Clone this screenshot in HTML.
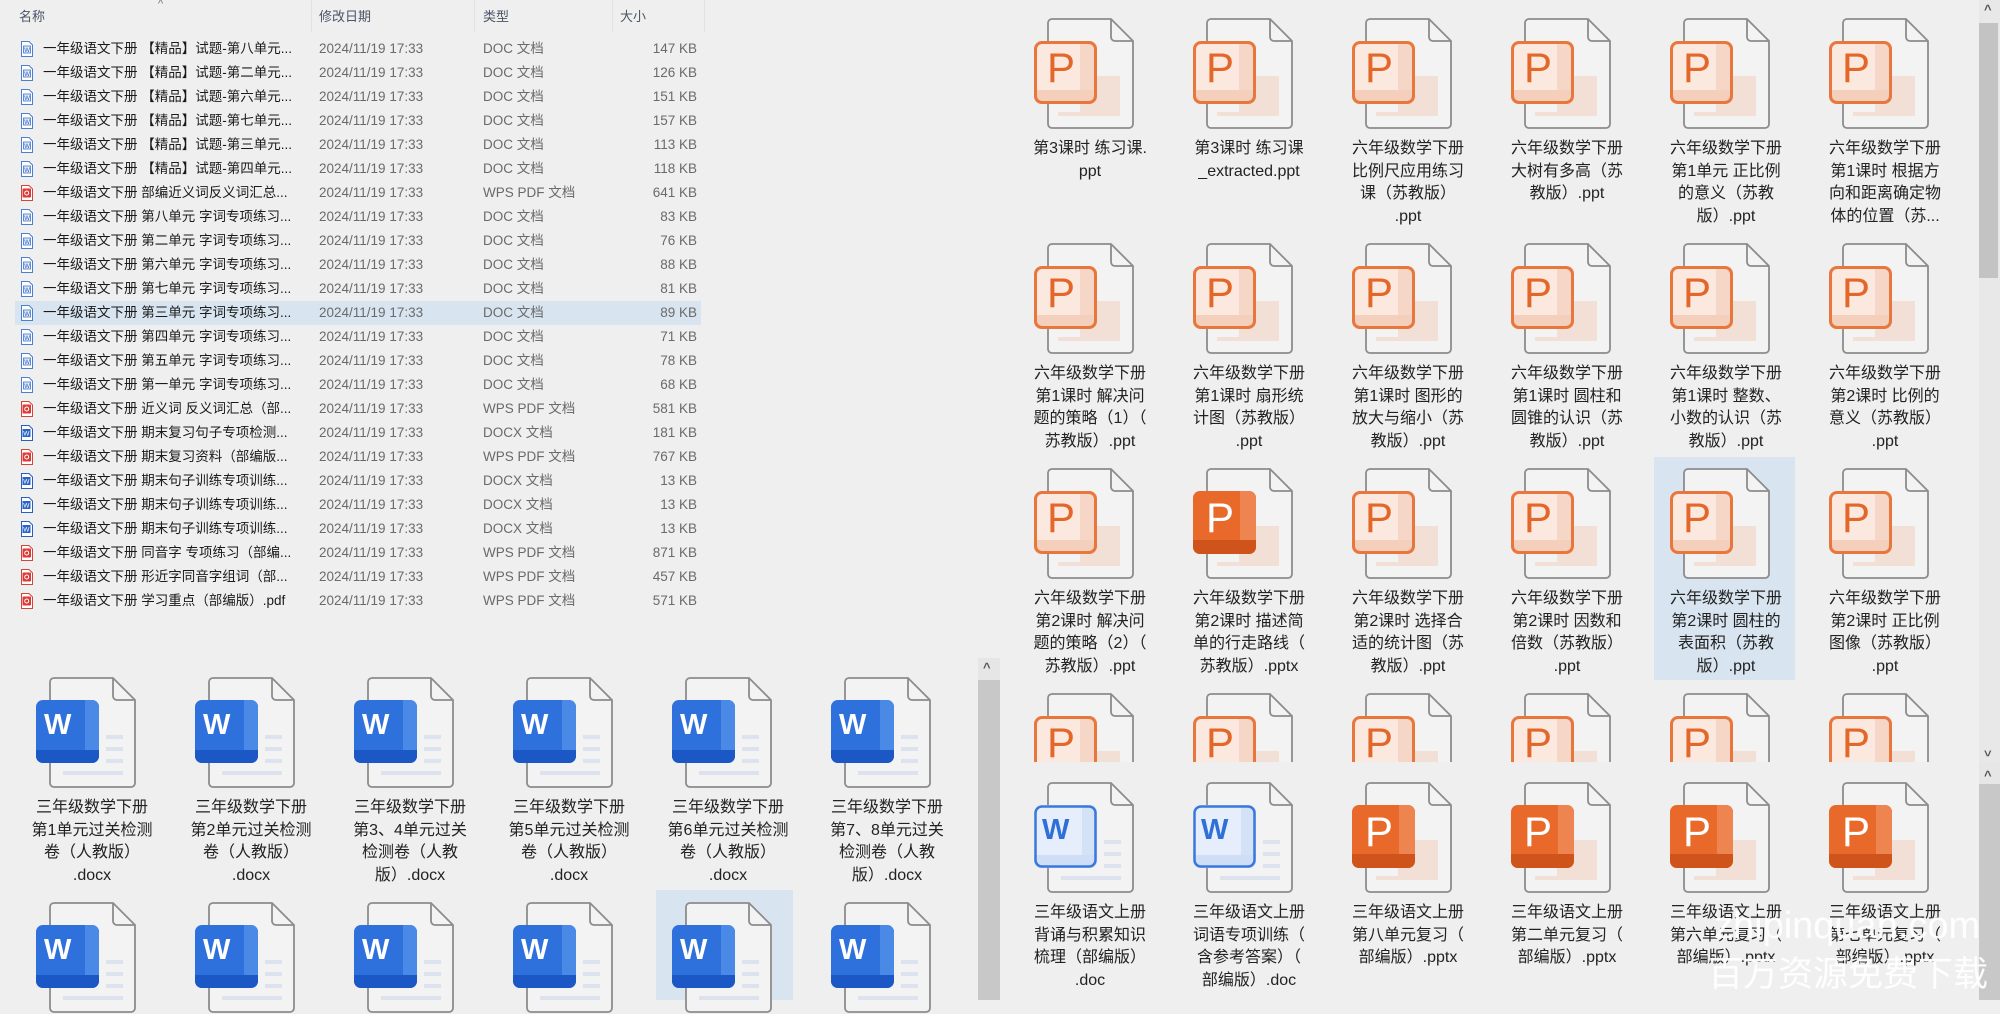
<!DOCTYPE html>
<html><head><meta charset="utf-8">
<style>
*{margin:0;padding:0;box-sizing:border-box}
body{width:2000px;height:1000px;overflow:hidden;background:#efefef;position:relative;font-family:"Liberation Sans","Noto Sans CJK SC",sans-serif;}
.a{position:absolute}
.hd{position:absolute;top:6px;font-size:13px;color:#4a5566}
.sep{position:absolute;top:0;width:1px;height:32px;background:#e2e2e2}
.row{position:absolute;left:15px;width:686px;height:24px;font-size:13.5px;line-height:24px;white-space:nowrap}
.row .n{position:absolute;left:28px;color:#1a1a1a}
.row .d{position:absolute;left:304px;color:#6a6a6a}
.row .t{position:absolute;left:468px;color:#6a6a6a}
.row .s{position:absolute;right:4px;color:#6a6a6a}
.row svg{position:absolute;left:5px;top:4px}
.it{position:absolute;width:150px}
.it svg{position:absolute;left:19px;top:0;overflow:visible}
.it .tx{position:absolute;left:0;top:120px;width:150px;text-align:center;font-size:16px;line-height:22.6px;color:#222;white-space:nowrap}
.clip{position:absolute;overflow:hidden}
</style></head><body>
<svg width="0" height="0" style="position:absolute">
<defs>
<clipPath id="bc"><rect x="0" y="23" width="63" height="63" rx="7"/></clipPath>
<symbol id="pg" viewBox="0 0 100 112"><path d="M18 1H77L99 23V106a4 4 0 0 1-4 4H18a4 4 0 0 1-4-4V5a4 4 0 0 1 4-4Z" fill="#f3f3f3" stroke="#8c8c8c" stroke-width="1.8"/><path d="M77 1V19a4 4 0 0 0 4 4H99" fill="none" stroke="#8c8c8c" stroke-width="1.8"/></symbol>
<symbol id="po" viewBox="0 0 100 112" overflow="visible"><use href="#pg" width="100" height="112"/><rect x="46" y="58" width="40" height="40" fill="#f2e0d7"/><rect x="24" y="94" width="60" height="4" fill="#f2e0d7"/>
<g clip-path="url(#bc)"><rect x="0" y="23" width="63" height="63" fill="#fbe8de"/><rect x="46" y="23" width="17" height="63" fill="#f6d6c6"/><rect x="0" y="72" width="63" height="14" fill="#f4cfbc"/></g>
<rect x="1.5" y="24.5" width="60" height="60" rx="6.5" fill="none" stroke="#e8773e" stroke-width="3"/>
<text x="13" y="64" font-size="42" fill="#e4672a" font-family="Liberation Sans">P</text></symbol>
<symbol id="pf" viewBox="0 0 100 112" overflow="visible"><use href="#pg" width="100" height="112"/><rect x="46" y="58" width="40" height="40" fill="#f2e0d7"/><rect x="24" y="94" width="60" height="4" fill="#f2e0d7"/>
<g clip-path="url(#bc)"><rect x="0" y="23" width="63" height="63" fill="#e8692a"/><rect x="47" y="23" width="16" height="63" fill="#ee8450"/><rect x="0" y="72" width="63" height="14" fill="#cf541c"/></g>
<text x="13" y="64" font-size="42" fill="#fff" font-family="Liberation Sans">P</text></symbol>
<symbol id="wf" viewBox="0 0 100 112" overflow="visible"><use href="#pg" width="100" height="112"/><g fill="#dde3ee"><rect x="70" y="58" width="17" height="4"/><rect x="70" y="70" width="17" height="4"/><rect x="70" y="82" width="17" height="4"/><rect x="27" y="94" width="60" height="4"/></g>
<g clip-path="url(#bc)"><rect x="0" y="23" width="63" height="63" fill="#2e70dc"/><rect x="49" y="23" width="14" height="63" fill="#4a89e6"/><rect x="0" y="73" width="63" height="13" fill="#1b58c6"/></g>
<text x="8" y="57" font-size="29" font-weight="bold" fill="#fff" font-family="Liberation Sans">W</text></symbol>
<symbol id="wo" viewBox="0 0 100 112" overflow="visible"><use href="#pg" width="100" height="112"/><g fill="#dde3ee"><rect x="70" y="58" width="17" height="4"/><rect x="70" y="70" width="17" height="4"/><rect x="70" y="82" width="17" height="4"/><rect x="27" y="94" width="60" height="4"/></g>
<g clip-path="url(#bc)"><rect x="0" y="23" width="63" height="63" fill="#e6eefb"/><rect x="48" y="23" width="15" height="63" fill="#d4e2f8"/><rect x="0" y="73" width="63" height="13" fill="#cfdef7"/></g>
<rect x="1.5" y="24.5" width="60" height="60" rx="6.5" fill="none" stroke="#3a78dd" stroke-width="2.5"/>
<text x="8" y="57" font-size="29" font-weight="bold" fill="#2e6fd8" font-family="Liberation Sans">W</text></symbol>
<symbol id="sw" viewBox="0 0 13 16"><path d="M1.5 .5H9L12.5 4V15.5H1.5Z" fill="#fff" stroke="#4a7fd4"/><rect x="3.5" y="5" width="7" height="7" fill="#e3ecfa" stroke="#3b72cf" stroke-width=".8"/><text x="4.3" y="11" font-size="6" fill="#2d63c4" font-family="Liberation Sans">W</text></symbol>
<symbol id="sx" viewBox="0 0 13 16"><path d="M1.5 .5H9L12.5 4V15.5H1.5Z" fill="#fff" stroke="#2a5fbf"/><rect x="2.5" y="4" width="8" height="8" fill="#2b64c8"/><text x="3.3" y="10.5" font-size="6.5" fill="#fff" font-family="Liberation Sans">W</text></symbol>
<symbol id="sp" viewBox="0 0 13 16"><path d="M1.5 .5H9L12.5 4V15.5H1.5Z" fill="#fff" stroke="#d0463d"/><rect x="2.5" y="3.5" width="8.5" height="9" rx="1" fill="#dd3a33"/><circle cx="6.7" cy="8" r="2" fill="none" stroke="#fff" stroke-width="1"/></symbol>
</defs></svg>

<div class="a" style="left:158px;top:-2px;font-size:11px;color:#777">^</div>
<div class="hd" style="left:19px">名称</div>
<div class="hd" style="left:319px">修改日期</div>
<div class="hd" style="left:483px">类型</div>
<div class="hd" style="left:620px">大小</div>
<div class="sep" style="left:311px"></div><div class="sep" style="left:474px"></div><div class="sep" style="left:612px"></div><div class="sep" style="left:704px"></div>

<div class="a" style="left:15px;top:300.5px;width:686px;height:24px;background:#d8e5f0"></div>

<div class="row" style="top:36.5px"><svg width="13" height="16"><use href="#sw"/></svg><span class="n">一年级语文下册 【精品】试题-第八单元...</span><span class="d">2024/11/19 17:33</span><span class="t">DOC 文档</span><span class="s">147 KB</span></div>
<div class="row" style="top:60.5px"><svg width="13" height="16"><use href="#sw"/></svg><span class="n">一年级语文下册 【精品】试题-第二单元...</span><span class="d">2024/11/19 17:33</span><span class="t">DOC 文档</span><span class="s">126 KB</span></div>
<div class="row" style="top:84.5px"><svg width="13" height="16"><use href="#sw"/></svg><span class="n">一年级语文下册 【精品】试题-第六单元...</span><span class="d">2024/11/19 17:33</span><span class="t">DOC 文档</span><span class="s">151 KB</span></div>
<div class="row" style="top:108.5px"><svg width="13" height="16"><use href="#sw"/></svg><span class="n">一年级语文下册 【精品】试题-第七单元...</span><span class="d">2024/11/19 17:33</span><span class="t">DOC 文档</span><span class="s">157 KB</span></div>
<div class="row" style="top:132.5px"><svg width="13" height="16"><use href="#sw"/></svg><span class="n">一年级语文下册 【精品】试题-第三单元...</span><span class="d">2024/11/19 17:33</span><span class="t">DOC 文档</span><span class="s">113 KB</span></div>
<div class="row" style="top:156.5px"><svg width="13" height="16"><use href="#sw"/></svg><span class="n">一年级语文下册 【精品】试题-第四单元...</span><span class="d">2024/11/19 17:33</span><span class="t">DOC 文档</span><span class="s">118 KB</span></div>
<div class="row" style="top:180.5px"><svg width="13" height="16"><use href="#sp"/></svg><span class="n">一年级语文下册 部编近义词反义词汇总...</span><span class="d">2024/11/19 17:33</span><span class="t">WPS PDF 文档</span><span class="s">641 KB</span></div>
<div class="row" style="top:204.5px"><svg width="13" height="16"><use href="#sw"/></svg><span class="n">一年级语文下册 第八单元 字词专项练习...</span><span class="d">2024/11/19 17:33</span><span class="t">DOC 文档</span><span class="s">83 KB</span></div>
<div class="row" style="top:228.5px"><svg width="13" height="16"><use href="#sw"/></svg><span class="n">一年级语文下册 第二单元 字词专项练习...</span><span class="d">2024/11/19 17:33</span><span class="t">DOC 文档</span><span class="s">76 KB</span></div>
<div class="row" style="top:252.5px"><svg width="13" height="16"><use href="#sw"/></svg><span class="n">一年级语文下册 第六单元 字词专项练习...</span><span class="d">2024/11/19 17:33</span><span class="t">DOC 文档</span><span class="s">88 KB</span></div>
<div class="row" style="top:276.5px"><svg width="13" height="16"><use href="#sw"/></svg><span class="n">一年级语文下册 第七单元 字词专项练习...</span><span class="d">2024/11/19 17:33</span><span class="t">DOC 文档</span><span class="s">81 KB</span></div>
<div class="row" style="top:300.5px"><svg width="13" height="16"><use href="#sw"/></svg><span class="n">一年级语文下册 第三单元 字词专项练习...</span><span class="d">2024/11/19 17:33</span><span class="t">DOC 文档</span><span class="s">89 KB</span></div>
<div class="row" style="top:324.5px"><svg width="13" height="16"><use href="#sw"/></svg><span class="n">一年级语文下册 第四单元 字词专项练习...</span><span class="d">2024/11/19 17:33</span><span class="t">DOC 文档</span><span class="s">71 KB</span></div>
<div class="row" style="top:348.5px"><svg width="13" height="16"><use href="#sw"/></svg><span class="n">一年级语文下册 第五单元 字词专项练习...</span><span class="d">2024/11/19 17:33</span><span class="t">DOC 文档</span><span class="s">78 KB</span></div>
<div class="row" style="top:372.5px"><svg width="13" height="16"><use href="#sw"/></svg><span class="n">一年级语文下册 第一单元 字词专项练习...</span><span class="d">2024/11/19 17:33</span><span class="t">DOC 文档</span><span class="s">68 KB</span></div>
<div class="row" style="top:396.5px"><svg width="13" height="16"><use href="#sp"/></svg><span class="n">一年级语文下册 近义词 反义词汇总（部...</span><span class="d">2024/11/19 17:33</span><span class="t">WPS PDF 文档</span><span class="s">581 KB</span></div>
<div class="row" style="top:420.5px"><svg width="13" height="16"><use href="#sx"/></svg><span class="n">一年级语文下册 期末复习句子专项检测...</span><span class="d">2024/11/19 17:33</span><span class="t">DOCX 文档</span><span class="s">181 KB</span></div>
<div class="row" style="top:444.5px"><svg width="13" height="16"><use href="#sp"/></svg><span class="n">一年级语文下册 期末复习资料（部编版...</span><span class="d">2024/11/19 17:33</span><span class="t">WPS PDF 文档</span><span class="s">767 KB</span></div>
<div class="row" style="top:468.5px"><svg width="13" height="16"><use href="#sx"/></svg><span class="n">一年级语文下册 期末句子训练专项训练...</span><span class="d">2024/11/19 17:33</span><span class="t">DOCX 文档</span><span class="s">13 KB</span></div>
<div class="row" style="top:492.5px"><svg width="13" height="16"><use href="#sx"/></svg><span class="n">一年级语文下册 期末句子训练专项训练...</span><span class="d">2024/11/19 17:33</span><span class="t">DOCX 文档</span><span class="s">13 KB</span></div>
<div class="row" style="top:516.5px"><svg width="13" height="16"><use href="#sx"/></svg><span class="n">一年级语文下册 期末句子训练专项训练...</span><span class="d">2024/11/19 17:33</span><span class="t">DOCX 文档</span><span class="s">13 KB</span></div>
<div class="row" style="top:540.5px"><svg width="13" height="16"><use href="#sp"/></svg><span class="n">一年级语文下册 同音字 专项练习（部编...</span><span class="d">2024/11/19 17:33</span><span class="t">WPS PDF 文档</span><span class="s">871 KB</span></div>
<div class="row" style="top:564.5px"><svg width="13" height="16"><use href="#sp"/></svg><span class="n">一年级语文下册 形近字同音字组词（部...</span><span class="d">2024/11/19 17:33</span><span class="t">WPS PDF 文档</span><span class="s">457 KB</span></div>
<div class="row" style="top:588.5px"><svg width="13" height="16"><use href="#sp"/></svg><span class="n">一年级语文下册 学习重点（部编版）.pdf</span><span class="d">2024/11/19 17:33</span><span class="t">WPS PDF 文档</span><span class="s">571 KB</span></div>

<div class="a" style="left:656px;top:890px;width:137px;height:110px;background:#d8e5f0"></div>
<div class="it" style="left:17px;top:677px"><svg width="100" height="112"><use href="#wf"/></svg><div class="tx">三年级数学下册<br>第1单元过关检测<br>卷（人教版）<br>.docx</div></div>
<div class="it" style="left:176px;top:677px"><svg width="100" height="112"><use href="#wf"/></svg><div class="tx">三年级数学下册<br>第2单元过关检测<br>卷（人教版）<br>.docx</div></div>
<div class="it" style="left:335px;top:677px"><svg width="100" height="112"><use href="#wf"/></svg><div class="tx">三年级数学下册<br>第3、4单元过关<br>检测卷（人教<br>版）.docx</div></div>
<div class="it" style="left:494px;top:677px"><svg width="100" height="112"><use href="#wf"/></svg><div class="tx">三年级数学下册<br>第5单元过关检测<br>卷（人教版）<br>.docx</div></div>
<div class="it" style="left:653px;top:677px"><svg width="100" height="112"><use href="#wf"/></svg><div class="tx">三年级数学下册<br>第6单元过关检测<br>卷（人教版）<br>.docx</div></div>
<div class="it" style="left:812px;top:677px"><svg width="100" height="112"><use href="#wf"/></svg><div class="tx">三年级数学下册<br>第7、8单元过关<br>检测卷（人教<br>版）.docx</div></div>
<div class="it" style="left:17px;top:902px"><svg width="100" height="112"><use href="#wf"/></svg></div>
<div class="it" style="left:176px;top:902px"><svg width="100" height="112"><use href="#wf"/></svg></div>
<div class="it" style="left:335px;top:902px"><svg width="100" height="112"><use href="#wf"/></svg></div>
<div class="it" style="left:494px;top:902px"><svg width="100" height="112"><use href="#wf"/></svg></div>
<div class="it" style="left:653px;top:902px"><svg width="100" height="112"><use href="#wf"/></svg></div>
<div class="it" style="left:812px;top:902px"><svg width="100" height="112"><use href="#wf"/></svg></div>

<div class="a" style="left:978px;top:658px;width:22px;height:342px;background:#e6e6e6"></div>
<div class="a" style="left:978px;top:680px;width:22px;height:320px;background:#c8c8c8"></div>
<div class="a" style="left:983px;top:660px;font-size:13px;color:#555;font-weight:bold">^</div>

<div class="clip" style="left:1000px;top:0;width:978px;height:762px">
<div class="a" style="left:654px;top:457px;width:141px;height:223px;background:#d8e5f0"></div>
<div class="it" style="left:15px;top:18px"><svg width="100" height="112"><use href="#po"/></svg><div class="tx">第3课时 练习课.<br>ppt</div></div>
<div class="it" style="left:174px;top:18px"><svg width="100" height="112"><use href="#po"/></svg><div class="tx">第3课时 练习课<br>_extracted.ppt</div></div>
<div class="it" style="left:333px;top:18px"><svg width="100" height="112"><use href="#po"/></svg><div class="tx">六年级数学下册<br>比例尺应用练习<br>课（苏教版）<br>.ppt</div></div>
<div class="it" style="left:492px;top:18px"><svg width="100" height="112"><use href="#po"/></svg><div class="tx">六年级数学下册<br>大树有多高（苏<br>教版）.ppt</div></div>
<div class="it" style="left:651px;top:18px"><svg width="100" height="112"><use href="#po"/></svg><div class="tx">六年级数学下册<br>第1单元 正比例<br>的意义（苏教<br>版）.ppt</div></div>
<div class="it" style="left:810px;top:18px"><svg width="100" height="112"><use href="#po"/></svg><div class="tx">六年级数学下册<br>第1课时 根据方<br>向和距离确定物<br>体的位置（苏...</div></div>

<div class="it" style="left:15px;top:243px"><svg width="100" height="112"><use href="#po"/></svg><div class="tx">六年级数学下册<br>第1课时 解决问<br>题的策略（1）（<br>苏教版）.ppt</div></div>
<div class="it" style="left:174px;top:243px"><svg width="100" height="112"><use href="#po"/></svg><div class="tx">六年级数学下册<br>第1课时 扇形统<br>计图（苏教版）<br>.ppt</div></div>
<div class="it" style="left:333px;top:243px"><svg width="100" height="112"><use href="#po"/></svg><div class="tx">六年级数学下册<br>第1课时 图形的<br>放大与缩小（苏<br>教版）.ppt</div></div>
<div class="it" style="left:492px;top:243px"><svg width="100" height="112"><use href="#po"/></svg><div class="tx">六年级数学下册<br>第1课时 圆柱和<br>圆锥的认识（苏<br>教版）.ppt</div></div>
<div class="it" style="left:651px;top:243px"><svg width="100" height="112"><use href="#po"/></svg><div class="tx">六年级数学下册<br>第1课时 整数、<br>小数的认识（苏<br>教版）.ppt</div></div>
<div class="it" style="left:810px;top:243px"><svg width="100" height="112"><use href="#po"/></svg><div class="tx">六年级数学下册<br>第2课时 比例的<br>意义（苏教版）<br>.ppt</div></div>

<div class="it" style="left:15px;top:468px"><svg width="100" height="112"><use href="#po"/></svg><div class="tx">六年级数学下册<br>第2课时 解决问<br>题的策略（2）（<br>苏教版）.ppt</div></div>
<div class="it" style="left:174px;top:468px"><svg width="100" height="112"><use href="#pf"/></svg><div class="tx">六年级数学下册<br>第2课时 描述简<br>单的行走路线（<br>苏教版）.pptx</div></div>
<div class="it" style="left:333px;top:468px"><svg width="100" height="112"><use href="#po"/></svg><div class="tx">六年级数学下册<br>第2课时 选择合<br>适的统计图（苏<br>教版）.ppt</div></div>
<div class="it" style="left:492px;top:468px"><svg width="100" height="112"><use href="#po"/></svg><div class="tx">六年级数学下册<br>第2课时 因数和<br>倍数（苏教版）<br>.ppt</div></div>
<div class="it" style="left:651px;top:468px"><svg width="100" height="112"><use href="#po"/></svg><div class="tx">六年级数学下册<br>第2课时 圆柱的<br>表面积（苏教<br>版）.ppt</div></div>
<div class="it" style="left:810px;top:468px"><svg width="100" height="112"><use href="#po"/></svg><div class="tx">六年级数学下册<br>第2课时 正比例<br>图像（苏教版）<br>.ppt</div></div>

<div class="it" style="left:15px;top:693px"><svg width="100" height="112"><use href="#po"/></svg></div>
<div class="it" style="left:174px;top:693px"><svg width="100" height="112"><use href="#po"/></svg></div>
<div class="it" style="left:333px;top:693px"><svg width="100" height="112"><use href="#po"/></svg></div>
<div class="it" style="left:492px;top:693px"><svg width="100" height="112"><use href="#po"/></svg></div>
<div class="it" style="left:651px;top:693px"><svg width="100" height="112"><use href="#po"/></svg></div>
<div class="it" style="left:810px;top:693px"><svg width="100" height="112"><use href="#po"/></svg></div>
</div>

<div class="it" style="left:1015px;top:782px"><svg width="100" height="112"><use href="#wo"/></svg><div class="tx">三年级语文上册<br>背诵与积累知识<br>梳理（部编版）<br>.doc</div></div>
<div class="it" style="left:1174px;top:782px"><svg width="100" height="112"><use href="#wo"/></svg><div class="tx">三年级语文上册<br>词语专项训练（<br>含参考答案）（<br>部编版）.doc</div></div>
<div class="it" style="left:1333px;top:782px"><svg width="100" height="112"><use href="#pf"/></svg><div class="tx">三年级语文上册<br>第八单元复习（<br>部编版）.pptx</div></div>
<div class="it" style="left:1492px;top:782px"><svg width="100" height="112"><use href="#pf"/></svg><div class="tx">三年级语文上册<br>第二单元复习（<br>部编版）.pptx</div></div>
<div class="it" style="left:1651px;top:782px"><svg width="100" height="112"><use href="#pf"/></svg><div class="tx">三年级语文上册<br>第六单元复习（<br>部编版）.pptx</div></div>
<div class="it" style="left:1810px;top:782px"><svg width="100" height="112"><use href="#pf"/></svg><div class="tx">三年级语文上册<br>第七单元复习（<br>部编版）.pptx</div></div>

<div class="a" style="left:1979px;top:0;width:21px;height:762px;background:#e8e8e8"></div>
<div class="a" style="left:1979px;top:23px;width:19px;height:255px;background:#c3c3c3"></div>
<div class="a" style="left:1984px;top:2px;font-size:13px;color:#555;font-weight:bold">^</div>
<div class="a" style="left:1984px;top:744px;font-size:13px;color:#555;font-weight:bold;transform:scaleY(-1)">^</div>
<div class="a" style="left:1979px;top:762px;width:21px;height:238px;background:#e6e6e6"></div>
<div class="a" style="left:1984px;top:768px;font-size:13px;color:#555;font-weight:bold">^</div>
<div class="a" style="left:1979px;top:784px;width:21px;height:216px;background:#c8c8c8"></div>

<div class="a" style="left:1714px;top:903px;font-size:38px;color:#fff;white-space:nowrap;line-height:46px;opacity:.95">zhipinquan.com</div>
<div class="a" style="left:1708px;top:955px;font-size:35px;color:#fff;white-space:nowrap;line-height:40px;opacity:.95">百万资源免费下载</div>
</body></html>
